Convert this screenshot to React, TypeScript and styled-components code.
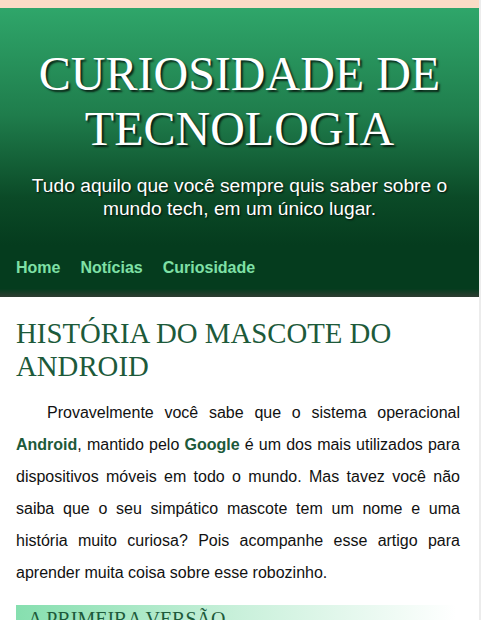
import React from "react";
import styled, { createGlobalStyle } from "styled-components";

const Global = createGlobalStyle`
  html, body { margin: 0; padding: 0; background: #ffffff; }
  body { font-family: "Liberation Sans", Arial, sans-serif; }
`;

const Shell = styled.div`
  display: flex;
  min-height: 620px;
`;

const Page = styled.div`
  width: 479px;
  background: #fadcc6;
  padding-top: 8px;
`;

const Track = styled.div`
  width: 7px;
  background: #ffffff;
  display: flex;
  &::before {
    content: "";
    width: 2px;
    background: #ececec;
  }
`;

const Header = styled.header`
  background: linear-gradient(to bottom, #2fa66a 0%, #1f7d4c 45%, #0b4a27 80%, #053c1e 100%);
  padding: 38px 16px 25px;
  text-align: center;
`;

const Title = styled.h1`
  margin: 0;
  font-family: "Liberation Serif", "Times New Roman", serif;
  font-weight: 400;
  font-size: 48px;
  line-height: 55px;
  color: #ffffff;
  text-shadow: 2px 2px 2px rgba(0, 0, 0, 0.75);
`;

const Subtitle = styled.p`
  margin: 18px 0 0;
  font-size: 19.2px;
  line-height: 23px;
  color: #ffffff;
  text-shadow: 1px 1px 2px rgba(0, 0, 0, 0.8);
`;

const Nav = styled.nav`
  background: linear-gradient(to bottom, #053c1e 0%, #053c1e 84%, #2e3c32 100%);
  padding: 13px 16px 20px;
  display: flex;
  gap: 20px;
`;

const NavLink = styled.a`
  font-weight: 700;
  font-size: 16px;
  line-height: 19px;
  color: #7fe0a6;
  text-decoration: none;
`;

const Main = styled.main`
  background: #ffffff;
  padding: 20px 19px 0 16px;
  height: 324px;
  overflow: hidden;
`;

const Heading = styled.h2`
  margin: 0;
  font-family: "Liberation Serif", "Times New Roman", serif;
  font-weight: 400;
  font-size: 28.8px;
  line-height: 33px;
  color: #1d5a3a;
`;

const Paragraph = styled.p`
  margin: 14px 0 16px;
  font-size: 16px;
  line-height: 32px;
  text-align: justify;
  text-indent: 31px;
  color: #111111;
`;

const Strong = styled.strong`
  color: #1d5a3a;
`;

const SectionTitle = styled.h3`
  margin: 0;
  padding: 3px 12px 3px;
  width: 416px;
  font-family: "Liberation Serif", "Times New Roman", serif;
  font-weight: 400;
  font-size: 20px;
  line-height: 23px;
  color: #1d5a3a;
  background: linear-gradient(to right, #86dfaf 0%, #c8f0da 50%, #ffffff 100%);
`;

export default function App() {
  return (
    <>
      <Global />
      <Shell>
        <Page>
          <Header>
            <Title>CURIOSIDADE DE TECNOLOGIA</Title>
            <Subtitle>
              Tudo aquilo que você sempre quis saber sobre o mundo tech, em um único lugar.
            </Subtitle>
          </Header>
          <Nav>
            <NavLink href="#">Home</NavLink>
            <NavLink href="#">Notícias</NavLink>
            <NavLink href="#">Curiosidade</NavLink>
          </Nav>
          <Main>
            <Heading>HISTÓRIA DO MASCOTE DO ANDROID</Heading>
            <Paragraph>
              Provavelmente você sabe que o sistema operacional <Strong>Android</Strong>, mantido pelo{" "}
              <Strong>Google</Strong> é um dos mais utilizados para dispositivos móveis em todo o mundo. Mas
              tavez você não saiba que o seu simpático mascote tem um nome e uma história muito curiosa? Pois
              acompanhe esse artigo para aprender muita coisa sobre esse robozinho.
            </Paragraph>
            <SectionTitle>A PRIMEIRA VERSÃO</SectionTitle>
          </Main>
        </Page>
        <Track />
      </Shell>
    </>
  );
}
